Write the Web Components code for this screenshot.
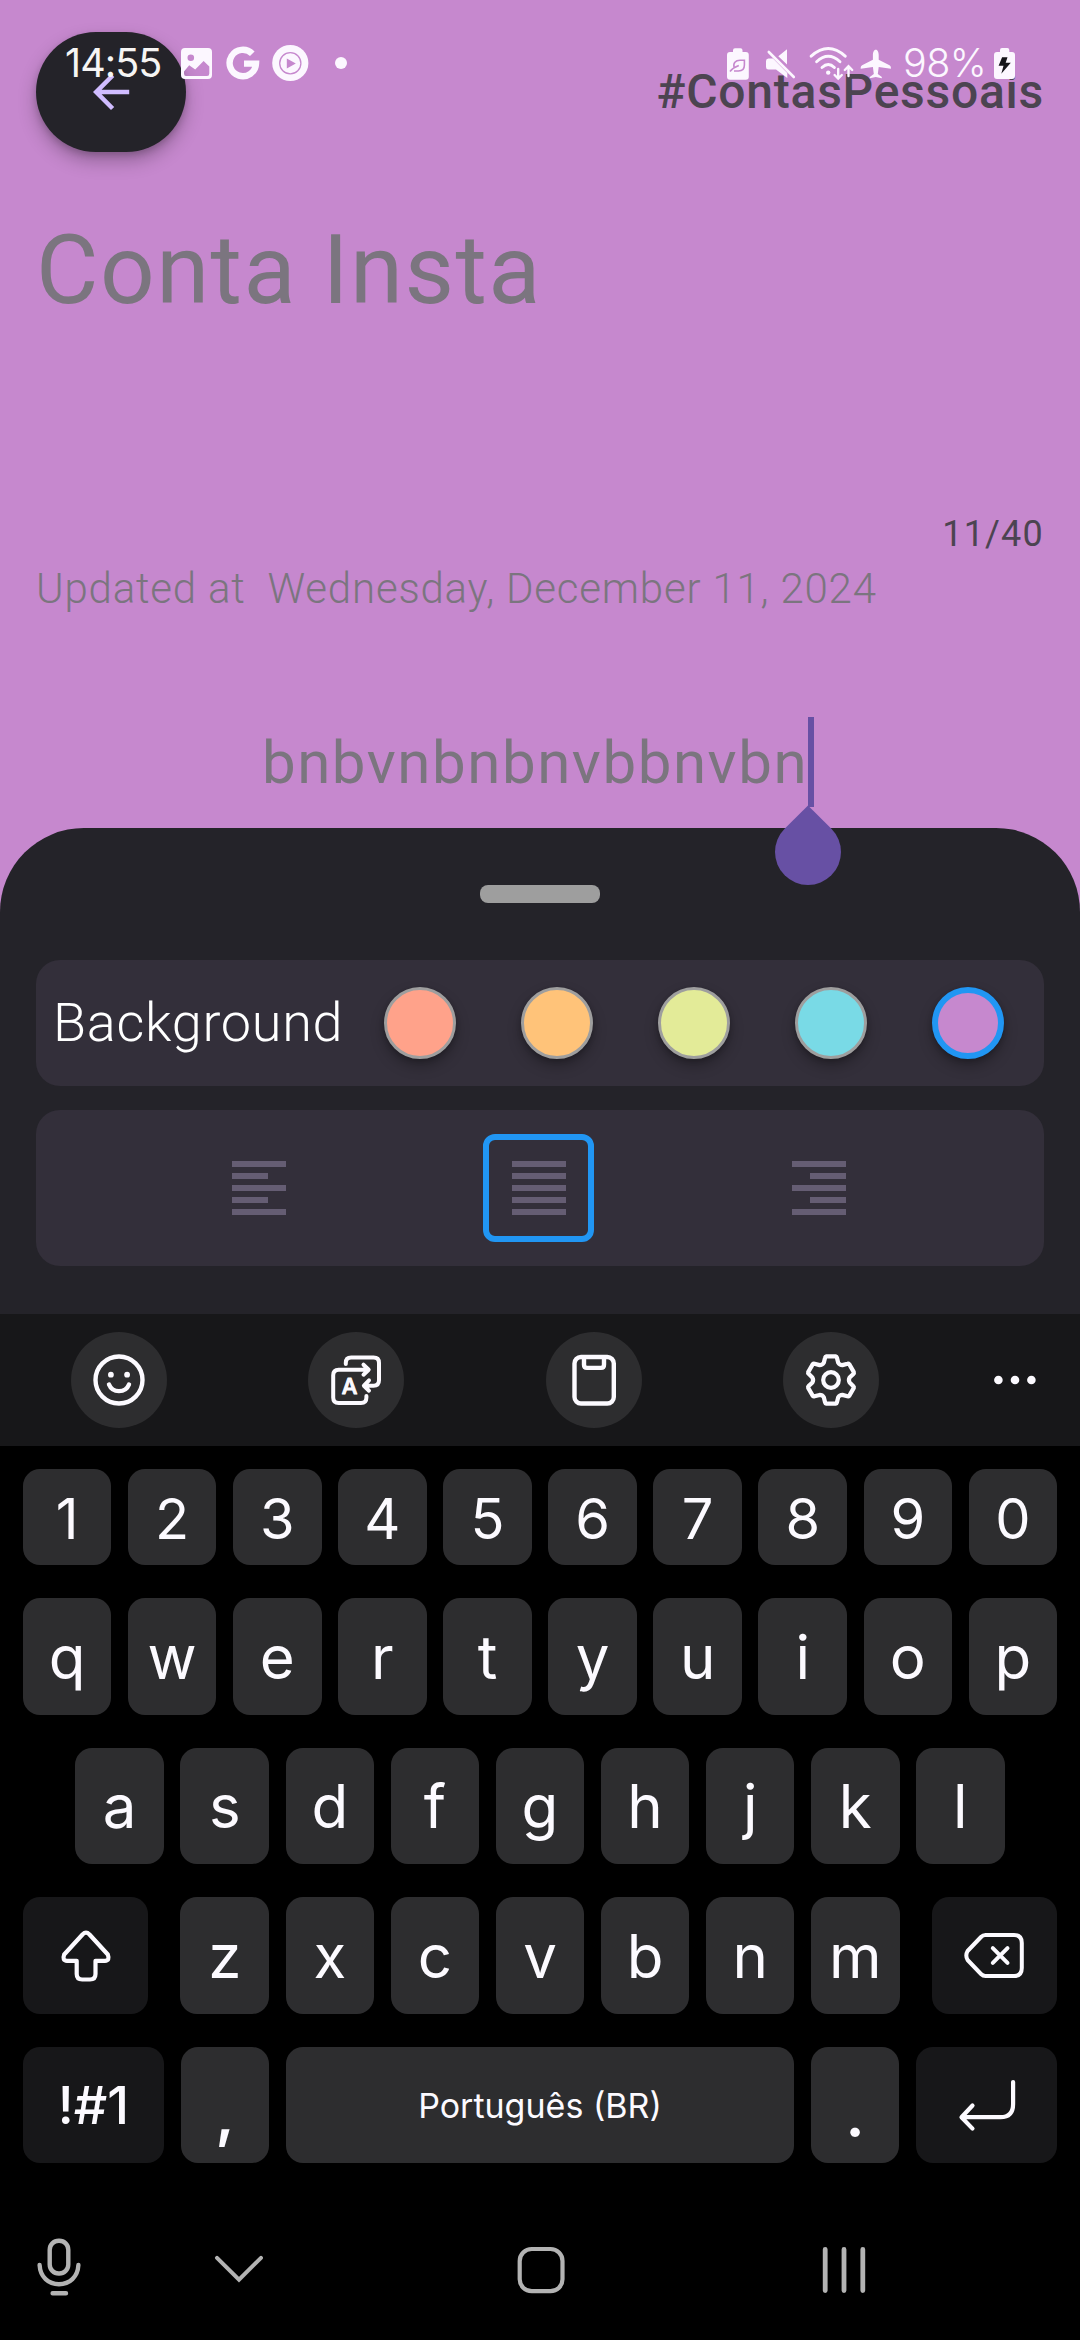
<!DOCTYPE html>
<html lang="en">
<head>
<meta charset="utf-8">
<title>Note editor</title>
<style>
  html, body { margin: 0; padding: 0; background: #000; }
  body { width: 1080px; height: 2340px; overflow: hidden; }
</style>
</head>
<body>
<note-app></note-app>
<script>
/* ---------- icons ---------- */
/* Each icon: [viewBox, body]. Units are screen pixels. */
const gear = (() => {
  // One tooth, turned six times round the centre.
  const pt = (x, y, a) => {
    const r = a * Math.PI / 180;
    return (831 + x * Math.cos(r) - y * Math.sin(r)).toFixed(2) + ' ' + (1380 + x * Math.sin(r) + y * Math.cos(r)).toFixed(2);
  };
  let d = '';
  for (let i = 0; i < 6; i++) {
    const a = i * 60;
    d += (i ? 'L' : 'M') + pt(-4.6, -23.7, a) + 'L' + pt(4.6, -23.7, a) + 'Q' + pt(5.6, -23.5, a) + ' ' + pt(5.9, -22.4, a) +
      'L' + pt(7.2, -17.3, a) + 'Q' + pt(8.6, -14.9, a) + ' ' + pt(11.4, -14.9, a) +
      'L' + pt(16.5, -16.3, a) + 'Q' + pt(17.5, -16.6, a) + ' ' + pt(18.2, -15.8, a);
  }
  return d + 'Z';
})();

const ICONS = {
  back: ['84 65.5 54 54', '<path fill="#d0bcff" d="M129.2 90.2H101.6L114.3 77.6 111 74.4 93 92.5 111 110.6 114.2 107.4 101.6 94.8H129.2Z"/>'],
  image: ['174 42 45 42', '<path fill="#fcf7ff" fill-rule="evenodd" d="M185 48H208Q212 48 212 52V75Q212 79 208 79H185Q181 79 181 75V52Q181 48 185 48ZM190.8 54.4A3.3 3.3 0 1 0 190.8 61A3.3 3.3 0 1 0 190.8 54.4ZM184 71.5L189.2 65.2 195.2 69.6 203.6 61 209.3 66.5V73.5Q209.3 76 207 76H186Q184 76 184 73.5Z"/>'],
  google: ['219 42 47 42', '<path fill="none" stroke="#fcf7ff" stroke-width="6.4" d="M252.3 53.8A13.2 13.2 0 1 0 256 63.6H244"/>'],
  play: ['266 42 49 42', '<circle cx="290.3" cy="63" r="18.1" fill="#fcf7ff"/><circle cx="290.3" cy="63.3" r="10.6" fill="none" stroke="#c688ce" stroke-width="1.3"/><path fill="#c688ce" d="M286.8 58.4V68.4L295.8 63.4Z"/>'],
  dot: ['315 42 52 42', '<circle cx="341" cy="63" r="6" fill="#fcf7ff"/>'],
  saver: ['720 42 37 42', '<path fill="#fcf7ff" d="M735 48.3H740.5Q742.5 48.3 742.5 50.3V52H745.8Q748.8 52 748.8 55V76.7Q748.8 79.7 745.8 79.7H730Q727 79.7 727 76.7V55Q727 52 730 52H733V50.3Q733 48.3 735 48.3Z"/><path fill="none" stroke="#c688ce" stroke-width="1.6" d="M734.2 67.5C732.8 63 735.5 60.2 740 60.2H744.4V65C744.4 69 742 71 738.5 71H734M730 71.4C732 68.8 735 66.8 738.8 65.4"/>'],
  mute: ['757 42 46 42', '<path fill="#fcf7ff" d="M778.3 56.2L787 49.3V64.6ZM768.4 58.5H773L787.3 73V78L776 69.5H768.4Q766 69.5 766 67V61Q766 58.5 768.4 58.5Z"/><path stroke="#fcf7ff" stroke-width="2.6" stroke-linecap="round" d="M768.8 52L793.8 77"/>'],
  wifi: ['803 42 53 42', '<g fill="none" stroke="#fcf7ff" stroke-width="2.9" stroke-linecap="round"><path d="M811.2 56.2Q828.3 41 845.2 56.2"/><path d="M816.6 61.7Q828.3 51 840 61.7"/><path d="M822 67.5Q828.3 61.5 834.4 67.5"/><path stroke-width="2.4" d="M838.2 69V78.3M834.6 75L838.2 78.6 841.8 75M848.5 76V66.5M844.8 70L848.5 66.3 852.2 70"/></g><circle cx="828.2" cy="72.6" r="2.2" fill="#fcf7ff"/>'],
  plane: ['856 42 40 42', '<path fill="#fcf7ff" d="M875.8 49.8C877.8 49.8 878.7 52.5 878.7 55V59.8L889.5 65.3Q890.9 66.1 890.9 67.5V68.8L878.7 67 877.8 74 881.8 77V78.2L875.8 77 869.8 78.2V77L873.8 74 872.9 67 860.7 68.8V67.5Q860.7 66.1 862.1 65.3L872.9 59.8V55C872.9 52.5 873.8 49.8 875.8 49.8Z"/>'],
  charge: ['988 42 32 42', '<path fill="#fcf7ff" d="M1002 48H1007.3Q1009.3 48 1009.3 50V52H1012Q1015 52 1015 55V76Q1015 79 1012 79H997Q994 79 994 76V55Q994 52 997 52H1000V50Q1000 48 1002 48Z"/><path fill="#16141a" d="M1002.1 57.3H1007.5L1005.7 62.7H1010.8L1001.3 73.8 1003.5 65.8H998.6Z"/>'],
  handle: ['770 800 76 90', '<path fill="#6750a4" d="M808 805.5L831.4 828.7A33 33 0 1 1 784.6 828.7Z"/>'],
  smile: ['71 1332 96 96', '<g fill="none" stroke="#fcfaff" stroke-width="4.4" stroke-linecap="round"><circle cx="119" cy="1380" r="23.5"/><path d="M109 1384.5C112.5 1393.3 125.5 1393.3 129 1384.5"/></g><g fill="#fcfaff"><circle cx="110.9" cy="1374.7" r="2.9"/><circle cx="127.1" cy="1374.7" r="2.9"/></g>'],
  translate: ['308 1332 96 96', '<g fill="none" stroke="#fcfaff" stroke-width="4" stroke-linecap="round" stroke-linejoin="round"><path d="M345.8 1364V1363Q345.8 1357.6 351.2 1357.6H373.5Q379 1357.6 379 1363V1380.3Q379 1385.7 373.5 1385.7H364.5M369 1380.3L363.9 1385.7 369 1390.7"/><path d="M368.3 1369.7H338.7Q333.2 1369.7 333.2 1375.2V1397.5Q333.2 1403 338.7 1403H361Q366.4 1403 366.4 1397.5V1396M363.5 1364.7L368.7 1369.7 363.5 1374.7"/></g><text x="349.6" y="1394" text-anchor="middle" fill="#fcfaff" stroke="#fcfaff" stroke-width="1" stroke-linejoin="round" font-family="Inter, sans-serif" font-weight="500" font-size="22">A</text>'],
  clipboard: ['546 1332 96 96', '<g fill="none" stroke="#fcfaff" stroke-width="4.4"><rect x="574.5" y="1357" width="39.3" height="46.5" rx="6.5"/><path d="M584 1357V1364.8Q584 1367.9 587 1367.9H601Q604 1367.9 604 1364.8V1357"/></g>'],
  gear: ['783 1332 96 96', `<g fill="none" stroke="#fcfaff" stroke-width="4.2" stroke-linejoin="round"><path d="${gear}"/><circle cx="831" cy="1380" r="7.8"/></g>`],
  more: ['991 1356 48 48', '<g fill="#fcfaff"><circle cx="998.4" cy="1380" r="4.3"/><circle cx="1015" cy="1380" r="4.3"/><circle cx="1031.4" cy="1380" r="4.3"/></g>'],
  shift: ['55.5 1925.5 60 60', '<path fill="none" stroke="#fcfaff" stroke-width="4.2" stroke-linejoin="round" d="M82 1934Q85.5 1930.5 89 1934L107.3 1954Q109.6 1960.3 104.5 1960.3H95V1973.5Q95 1979 89.5 1979H81.7Q76.2 1979 76.2 1973.5V1960.3H66.5Q61.4 1960.3 63.7 1954Z"/>'],
  erase: ['960 1921 69 69', '<g fill="none" stroke="#fcfaff" stroke-width="4" stroke-linecap="round" stroke-linejoin="round"><path d="M985.5 1935H1014Q1021.8 1935 1021.8 1943V1968Q1021.8 1976 1014 1976H985.5Q983 1976 981 1974L967.6 1960Q965 1955.5 967.6 1951L981 1937Q983 1935 985.5 1935Z"/><path d="M992.8 1948.2L1007.5 1962.8M1007.5 1948.2L992.8 1962.8"/></g>'],
  enter: ['951.5 2070 70 70', '<path fill="none" stroke="#fcfaff" stroke-width="4.2" stroke-linecap="round" stroke-linejoin="round" d="M1012.6 2082V2104Q1012.6 2117.2 1000 2117.2H961.5M972 2105.5L961 2117.2 972 2128.6"/>'],
  mic: ['29 2235 60 66', '<g fill="none" stroke="#b3b3b3" stroke-width="4.4" stroke-linecap="round"><rect x="49.7" y="2240.7" width="18.6" height="32.8" rx="9"/><path d="M39.6 2265C40.2 2277 48.5 2284.2 59 2284.2S77.8 2277 78.4 2265M52.6 2293.3H66"/></g>'],
  down: ['209 2240 60 60', '<path fill="none" stroke="#b3b3b3" stroke-width="4" stroke-linecap="round" d="M217 2257.8L239 2279.6 261 2257.8"/>'],
  home: ['511 2240 60 60', '<rect x="519.7" y="2249" width="42.8" height="42.2" rx="12" fill="none" stroke="#b3b3b3" stroke-width="4.2"/>'],
  recents: ['814 2240 60 60', '<path stroke="#b3b3b3" stroke-width="4.8" stroke-linecap="round" d="M825.2 2249.5V2290.5M844 2249.5V2290.5M862.8 2249.5V2290.5"/>']
};

const define = (name, html, init) => {
  const tpl = document.createElement('template');
  tpl.innerHTML = html;
  customElements.define(name, class extends HTMLElement {
    connectedCallback() {
      if (this.shadowRoot) return;
      const root = this.attachShadow({ mode: 'open' });
      root.append(tpl.content.cloneNode(true));
      if (init) init(this, root);
    }
  });
};

define('ui-icon', `<style>:host{display:block;flex:none}svg{display:block}</style>`, (host, root) => {
  const [box, body] = ICONS[host.getAttribute('name')];
  const [, , w, h] = box.split(' ');
  const holder = document.createElement('template');
  holder.innerHTML = `<svg width="${w}" height="${h}" viewBox="${box}">${body}</svg>`;
  root.append(holder.content);
});

/* ---------- status bar ---------- */
define('status-bar', `<style>
  :host{display:flex;justify-content:space-between;height:84px;align-items:flex-end;
    font:400 39.5px/42px Inter,sans-serif;color:#fcf7ff}
  .side{display:flex;align-items:center;height:42px}
  .left{padding-left:65px}
  .right{padding-right:60px}
  .time{width:109px;letter-spacing:-.9px;white-space:nowrap;color:#f6f5f4}
  .pct{width:92px;box-sizing:border-box;padding-left:7px;letter-spacing:-.6px;white-space:nowrap;font-weight:350}
</style>
<div class="side left"><span class="time">14:55</span><ui-icon name="image"></ui-icon><ui-icon name="google"></ui-icon><ui-icon name="play"></ui-icon><ui-icon name="dot"></ui-icon></div>
<div class="side right"><ui-icon name="saver"></ui-icon><ui-icon name="mute"></ui-icon><ui-icon name="wifi"></ui-icon><ui-icon name="plane"></ui-icon><span class="pct">98%</span><ui-icon name="charge"></ui-icon></div>`);

/* ---------- note ---------- */
define('back-button', `<style>
  :host{display:flex;align-items:center;justify-content:center;width:150px;height:120px;border-radius:60px;
    background:#242329;box-shadow:0 9px 18px rgba(0,0,0,.26),0 3px 6px rgba(0,0,0,.16)}
</style><ui-icon name="back"></ui-icon>`);

define('note-header', `<style>
  :host{display:flex;justify-content:space-between;align-items:center;height:120px;
    font:500 48px/72px Roboto,sans-serif;letter-spacing:.74px;color:#4c4451}
</style><back-button></back-button><span><slot></slot></span>`);

define('note-text', `<style>
  :host{display:block;color:#7b757f;letter-spacing:1.45px;font:400 96px/144px Roboto,sans-serif;white-space:pre}
  :host([kind=count]){font-size:36px;line-height:54px;text-align:right;color:#4c4451;letter-spacing:1.2px}
  :host([kind=date]){font-size:42px;line-height:54px;font-weight:300;letter-spacing:.79px;padding-top:1px}
  :host([kind=body]){font-size:60px;line-height:90px;letter-spacing:1.54px;padding-top:1px;height:89px}
</style><slot></slot>`);

define('text-cursor', `<style>
  :host{display:block;position:relative;width:6px;height:90px;background:#6750a4}
  ui-icon{position:absolute;left:-38px;top:83px;z-index:3}
</style><ui-icon name="handle"></ui-icon>`);

define('note-page', `<style>
  :host{display:flex;flex-direction:column;box-sizing:border-box;height:828px;padding:32px 36px 0}
  .title{padding-top:46px}
  .count{padding-top:165px}
  .body{display:flex;justify-content:center;padding:101px 4px 0 0}
</style>
<note-header>#ContasPessoais</note-header>
<note-text class="title">Conta Insta</note-text>
<note-text class="count" kind="count">11/40</note-text>
<note-text kind="date">Updated at  Wednesday, December 11, 2024</note-text>
<div class="body"><note-text kind="body">bnbvnbnbnvbbnvbn</note-text><text-cursor></text-cursor></div>`);

/* ---------- bottom sheet ---------- */
define('color-dot', `<style>
  :host{display:block;box-sizing:border-box;width:72px;height:72px;border-radius:50%;border:3px solid #9e9e9e;
    background:var(--dot);box-shadow:0 7px 14px rgba(0,0,0,.28),0 2px 5px rgba(0,0,0,.2)}
  :host([selected]){border:6px solid #2196f3}
</style>`, host => host.style.setProperty('--dot', host.getAttribute('color')));

define('align-option', `<style>
  :host{display:flex;flex-direction:column;justify-content:center;align-items:flex-start;gap:6px;box-sizing:border-box;
    width:111px;height:108px;padding:0 28.5px}
  :host([selected]){border:6px solid #2196f3;border-radius:12px;padding:0 22.5px}
  :host([kind=right]){align-items:flex-end}
  i{display:block;width:54px;height:6px;background:#655d73}
  :host([kind=left]) i:nth-of-type(even),:host([kind=right]) i:nth-of-type(even){width:36px}
</style><i></i><i></i><i></i><i></i><i></i>`);

define('sheet-card', `<style>
  :host{display:flex;align-items:center;box-sizing:border-box;border-radius:24px;background:#332f3a}
</style><slot></slot>`);

define('bottom-sheet', `<style>
  :host{display:flex;flex-direction:column;align-items:center;box-sizing:border-box;height:486px;padding:57px 36px 0;
    border-radius:84px 84px 0 0;background:#242329}
  .grip{width:120px;height:18px;border-radius:8px;background:#9e9e9e}
  sheet-card{width:100%}
  .colors{height:126px;margin-top:57px;padding:0 40.5px 0 17px;justify-content:space-between}
  .label{font:300 54px/72px Roboto,sans-serif;letter-spacing:.72px;color:#fff}
  .dots{display:flex;gap:64.8px}
  .aligns{height:156px;margin-top:24px;justify-content:center;gap:169px;padding-right:3px}
</style>
<div class="grip"></div>
<sheet-card class="colors"><span class="label">Background</span>
  <div class="dots"><color-dot color="#ffa28a"></color-dot><color-dot color="#ffc379"></color-dot><color-dot color="#e3eb98"></color-dot><color-dot color="#79dae6"></color-dot><color-dot color="#c688ce" selected></color-dot></div>
</sheet-card>
<sheet-card class="aligns"><align-option kind="left"></align-option><align-option kind="justify" selected></align-option><align-option kind="right"></align-option></sheet-card>`);

/* ---------- keyboard ---------- */
define('tool-button', `<style>
  :host{display:block;width:96px;height:96px;border-radius:50%;background:#2d2d2f}
</style><slot></slot>`);

define('kb-toolbar', `<style>
  :host{display:flex;align-items:center;box-sizing:border-box;height:132px;padding-left:71px;background:#171719}
  .tools{display:flex;gap:141.33px}
  .more{margin-left:112px}
</style>
<div class="tools"><tool-button><ui-icon name="smile"></ui-icon></tool-button><tool-button><ui-icon name="translate"></ui-icon></tool-button><tool-button><ui-icon name="clipboard"></ui-icon></tool-button><tool-button><ui-icon name="gear"></ui-icon></tool-button></div>
<ui-icon class="more" name="more"></ui-icon>`);

define('kb-key', `<style>
  :host{display:flex;align-items:center;justify-content:center;box-sizing:border-box;flex:none;width:88.6px;height:100%;
    border-radius:17px;background:#2d2d2f;color:#fcfaff;font:400 60px/72px Inter,sans-serif;white-space:nowrap}
  :host([num]){font-size:56px;padding-top:3px}
  :host([fn]){background:#171719;width:125px}
  :host([wide]){width:141px;font-size:52.5px;font-weight:450}
  :host([space]){width:508px;font-size:34px;padding-top:2px}
  :host([punct]){padding-top:18px;font-weight:600}
</style><slot></slot>`);

define('kb-row', `<style>
  :host{display:flex;justify-content:center;gap:16.5px;height:116px}
</style>`, (host, root) => {
  const num = host.hasAttribute('num');
  for (const ch of host.getAttribute('keys')) {
    const key = document.createElement('kb-key');
    if (num) key.setAttribute('num', '');
    key.textContent = ch;
    root.append(key);
  }
});

define('on-screen-keyboard', `<style>
  :host{display:flex;flex-direction:column;background:#000}
  .keys{display:flex;flex-direction:column;padding:23px 23px 0}
  .digits{height:96px}
  .top{height:117px;margin-top:33px}
  .home{margin-top:33px}
  .row{display:flex;justify-content:space-between;height:117px;margin-top:33px}
  .row.last{height:116px}
</style>
<kb-toolbar></kb-toolbar>
<div class="keys">
  <kb-row class="digits" num keys="1234567890"></kb-row>
  <kb-row class="top" keys="qwertyuiop"></kb-row>
  <kb-row class="home" keys="asdfghjkl"></kb-row>
  <div class="row"><kb-key fn><ui-icon name="shift"></ui-icon></kb-key><kb-row keys="zxcvbnm" style="height:117px"></kb-row><kb-key fn><ui-icon name="erase"></ui-icon></kb-key></div>
  <div class="row last"><kb-key fn wide>!#1</kb-key><kb-key punct>,</kb-key><kb-key space>Português (BR)</kb-key><kb-key punct>.</kb-key><kb-key fn wide><ui-icon name="enter"></ui-icon></kb-key></div>
</div>`);

define('nav-bar', `<style>
  :host{display:flex;align-items:flex-start;box-sizing:border-box;flex:1;padding:77px 0 0 29px;background:#000}
  .mic{margin-top:-5px}
  .down{margin-left:120px}
  .home{margin-left:242px}
  .recents{margin-left:243px}
</style><ui-icon class="mic" name="mic"></ui-icon><ui-icon class="down" name="down"></ui-icon><ui-icon class="home" name="home"></ui-icon><ui-icon class="recents" name="recents"></ui-icon>`);

define('note-app', `<style>
  :host{display:flex;flex-direction:column;position:relative;width:1080px;height:2340px;overflow:hidden;background:#c688ce}
  status-bar{position:absolute;left:0;right:0;top:0;z-index:5}
  note-page{position:relative;z-index:2}
</style>
<status-bar></status-bar>
<note-page></note-page>
<bottom-sheet></bottom-sheet>
<on-screen-keyboard></on-screen-keyboard>
<nav-bar></nav-bar>`);
</script>
</body>
</html>
